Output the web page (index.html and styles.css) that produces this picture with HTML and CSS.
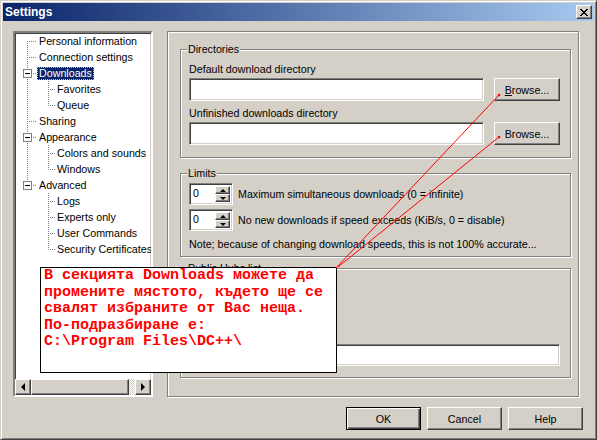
FILE: index.html
```html
<!DOCTYPE html>
<html lang="bg">
<head>
    <meta charset="UTF-8">
    <title>Settings</title>
    <link rel="stylesheet" href="styles.css">
</head>
<body>

<div class="window">
    <div class="titlebar">
        <span class="title">Settings</span>
        <span class="close-btn">
            <svg width="8" height="7" viewBox="0 0 8 7"><path fill="#000" d="M0 0h2v1H0zM6 0h2v1H6zM1 1h2v1H1zM5 1h2v1H5zM2 2h4v1H2zM3 3h2v1H3zM2 4h4v1H2zM1 5h2v1H1zM5 5h2v1H5zM0 6h2v1H0zM6 6h2v1H6z"/></svg>
        </span>
    </div>

    <div class="client">
        <div class="main">
            <!-- page tree -->
            <div class="tree sunken">
                <div class="tree-items">
                    <ul class="nodes">
                        <li><div class="row"><span class="t">Personal information</span></div></li>
                        <li><div class="row"><span class="t">Connection settings</span></div></li>
                        <li class="open"><div class="row"><span class="box"></span><span class="t sel">Downloads</span></div>
                            <ul>
                                <li><div class="row"><span class="t">Favorites</span></div></li>
                                <li><div class="row"><span class="t">Queue</span></div></li>
                            </ul>
                        </li>
                        <li><div class="row"><span class="t">Sharing</span></div></li>
                        <li class="open"><div class="row"><span class="box"></span><span class="t">Appearance</span></div>
                            <ul>
                                <li><div class="row"><span class="t">Colors and sounds</span></div></li>
                                <li><div class="row"><span class="t">Windows</span></div></li>
                            </ul>
                        </li>
                        <li class="open"><div class="row"><span class="box"></span><span class="t">Advanced</span></div>
                            <ul>
                                <li><div class="row"><span class="t">Logs</span></div></li>
                                <li><div class="row"><span class="t">Experts only</span></div></li>
                                <li><div class="row"><span class="t">User Commands</span></div></li>
                                <li><div class="row"><span class="t">Security Certificates</span></div></li>
                            </ul>
                        </li>
                    </ul>
                </div>
                <div class="hscroll">
                    <span class="sbtn raised"><span class="arrow-left"></span></span>
                    <span class="thumb raised"></span>
                    <span class="track"></span>
                    <span class="sbtn raised"><span class="arrow-right"></span></span>
                </div>
            </div>

            <!-- Downloads page -->
            <div class="page">
                <fieldset class="group dirs">
                    <legend>Directories</legend>
                    <div class="lbl">Default download directory</div>
                    <div class="path-row">
                        <span class="field sunken"></span>
                        <span class="btn raised"><u>B</u>rowse...</span>
                    </div>
                    <div class="lbl">Unfinished downloads directory</div>
                    <div class="path-row">
                        <span class="field sunken"></span>
                        <span class="btn raised">Browse...</span>
                    </div>
                </fieldset>

                <fieldset class="group limits">
                    <legend>Limits</legend>
                    <div class="spin-row">
                        <span class="spin sunken">
                            <span class="spin-val">0</span>
                            <span class="spin-btns"><span class="sb raised up"></span><span class="sb raised down"></span></span>
                        </span>
                        <span>Maximum simultaneous downloads (0 = infinite)</span>
                    </div>
                    <div class="spin-row">
                        <span class="spin sunken">
                            <span class="spin-val">0</span>
                            <span class="spin-btns"><span class="sb raised up"></span><span class="sb raised down"></span></span>
                        </span>
                        <span>No new downloads if speed exceeds (KiB/s, 0 = disable)</span>
                    </div>
                    <div class="note-line">Note; because of changing download speeds, this is not 100% accurate...</div>
                </fieldset>

                <fieldset class="group hubs">
                    <legend>Public Hubs list</legend>
                    <span class="btn raised hub-btn">Configure Public Hub Lists</span>
                    <div class="lbl">HTTP Proxy (for hublist only)</div>
                    <span class="field sunken wide"></span>
                </fieldset>
            </div>
        </div>

        <div class="actions">
            <span class="btn raised default">OK</span>
            <span class="btn raised">Cancel</span>
            <span class="btn raised">Help</span>
        </div>
    </div>

    <!-- help callout pointing at the Browse buttons -->
    <div class="callout">В секцията Downloads можете да<br>промените мястото, където ще се<br>свалят избраните от Вас неща.<br>По-подразбиране е:<br>C:\Program Files\DC++\</div>

    <svg class="pointers" width="597" height="440" viewBox="0 0 597 440">
        <g stroke="#ff0000" stroke-width="1" fill="none">
            <line x1="336" y1="268" x2="499" y2="95"/>
            <line x1="338" y1="267" x2="499" y2="137"/>
        </g>
        <g fill="#ff0000">
            <circle cx="499" cy="95" r="1.3"/>
            <circle cx="499" cy="137" r="1.3"/>
        </g>
    </svg>
</div>

</body>
</html>
```

FILE: styles.css
```css
body {
    margin: 0;
    background: #d4d0c8;
    font-family: "Liberation Sans", Arial, sans-serif;
    font-size: 10.7px;
    color: #000;
}

/* classic 3D edges */
.raised {
    box-sizing: border-box;
    background: #d4d0c8;
    border: 1px solid;
    border-color: #fff #404040 #404040 #fff;
    box-shadow: inset -1px -1px 0 #808080;
}

.sunken {
    box-sizing: border-box;
    background: #fff;
    border: 1px solid;
    border-color: #808080 #fff #fff #808080;
    box-shadow: inset 1px 1px 0 #404040, inset -1px -1px 0 #d4d0c8;
}

.window {
    position: relative;
    width: 597px;
    height: 440px;
    box-sizing: border-box;
    padding: 2px;
    background: #d4d0c8;
    border: 1px solid;
    border-color: #d4d0c8 #404040 #404040 #d4d0c8;
    box-shadow: inset 1px 1px 0 #fff, inset -1px -1px 0 #808080;
    display: flex;
    flex-direction: column;
}

.titlebar {
    height: 18px;
    display: flex;
    align-items: center;
    justify-content: space-between;
    padding: 0 2px;
    background: linear-gradient(to right, #0a246a, #a6caf0);
}

.title {
    color: #fff;
    font-weight: bold;
    font-size: 12px;
}

.close-btn {
    width: 16px;
    height: 14px;
    display: flex;
    align-items: center;
    justify-content: center;
    box-sizing: border-box;
    background: #d4d0c8;
    border: 1px solid;
    border-color: #fff #404040 #404040 #fff;
    box-shadow: inset -1px -1px 0 #808080;
}

.client {
    flex: 1;
    display: flex;
    flex-direction: column;
    padding: 10px 11px 0 10px;
}

.main {
    display: flex;
    gap: 14px;
    height: 366px;
}

/* tree */
.tree {
    width: 140px;
    height: 366px;
    display: flex;
    flex-direction: column;
    border-width: 2px;
    border-style: solid;
    border-color: #808080 #fff #fff #808080;
    box-shadow: inset 1px 1px 0 #404040, inset -1px -1px 0 #d4d0c8;
    padding: 0;
}

.tree .tree-items {
    flex: 1;
    overflow: hidden;
}

.nodes, .nodes ul {
    list-style: none;
    margin: 0;
    padding: 0;
}

.nodes li {
    position: relative;
}

.nodes > li {
    padding-left: 24px;
}

.nodes ul > li {
    padding-left: 18px;
}

.row {
    height: 16px;
    display: flex;
    align-items: center;
    white-space: nowrap;
}

/* dotted connectors */
.nodes li::before {
    content: "";
    position: absolute;
    top: 0;
    bottom: 0;
    width: 1px;
    background: repeating-linear-gradient(to bottom, #808080 0 1px, transparent 1px 2px);
}

.nodes > li::before { left: 12px; }
.nodes > li:first-child::before { top: 8px; }
.nodes ul > li::before { left: 9px; }
.nodes li:last-child::before { bottom: auto; height: 9px; }

.row::before {
    content: "";
    position: absolute;
    top: 8px;
    height: 1px;
    background: repeating-linear-gradient(to right, #808080 0 1px, transparent 1px 2px);
}

.nodes > li > .row::before { left: 12px; width: 10px; }
.nodes ul > li > .row::before { left: 9px; width: 7px; }

.box {
    position: absolute;
    left: 8px;
    top: 4px;
    width: 9px;
    height: 9px;
    box-sizing: border-box;
    border: 1px solid #808080;
    background: #fff;
}

.box::after {
    content: "";
    position: absolute;
    left: 1px;
    top: 3px;
    width: 5px;
    height: 1px;
    background: #000;
}

.t {
    padding: 0 2px;
    margin-left: -2px;
    line-height: 13px;
}

.t.sel {
    background: #0a246a;
    color: #fff;
    outline: 1px dotted #c8c480;
    outline-offset: -1px;
}

.hscroll {
    height: 16px;
    display: flex;
}

.sbtn {
    width: 16px;
    height: 16px;
    display: flex;
    align-items: center;
    justify-content: center;
}

.arrow-left {
    border-right: 4px solid #000;
    border-top: 4px solid transparent;
    border-bottom: 4px solid transparent;
}

.arrow-right {
    border-left: 4px solid #000;
    border-top: 4px solid transparent;
    border-bottom: 4px solid transparent;
}

.thumb {
    width: 98px;
    height: 16px;
}

.track {
    flex: 1;
    background: repeating-conic-gradient(#fff 0 25%, #d4d0c8 0 50%) 0 0 / 2px 2px;
}

/* right page */
.page {
    width: 412px;
    height: 366px;
    box-sizing: border-box;
    padding: 11px 7px 0 12px;
    border: 1px solid #808080;
    box-shadow: 1px 1px 0 #fff, inset 1px 1px 0 #fff;
}

.group {
    margin: 0;
    min-width: 0;
    border: 1px solid #808080;
    box-shadow: 1px 1px 0 #fff, inset 1px 1px 0 #fff;
    padding: 7px 10px 12px 8px;
}

.group legend {
    padding: 0 1px;
    margin-left: -2px;
    line-height: 13px;
    background: #d4d0c8;
}

.lbl {
    line-height: 13px;
    margin-bottom: 2px;
}

.path-row {
    display: flex;
    gap: 10px;
    margin-bottom: 6px;
}

.path-row:last-child {
    margin-bottom: 0;
}

.field {
    flex: 1;
    height: 23px;
}

.btn {
    width: 66px;
    height: 23px;
    display: flex;
    align-items: center;
    justify-content: center;
}

.limits {
    margin-top: 9px;
    padding: 3px 10px 5px 8px;
}

.spin-row {
    display: flex;
    align-items: center;
    gap: 5px;
    margin-bottom: 4px;
}

.spin {
    width: 44px;
    height: 22px;
    display: flex;
    padding: 2px;
}

.spin-val {
    flex: 1;
    line-height: 14px;
    padding-left: 1px;
}

.spin-btns {
    width: 15px;
    display: flex;
    flex-direction: column;
}

.sb {
    flex: 1;
    display: flex;
    align-items: center;
    justify-content: center;
}

.sb::after {
    content: "";
    border-left: 3px solid transparent;
    border-right: 3px solid transparent;
}

.sb.up::after { border-bottom: 3px solid #000; }
.sb.down::after { border-top: 3px solid #000; }

.note-line {
    line-height: 13px;
    margin-top: 7px;
}

.hubs {
    margin-top: 5px;
    padding: 8px 10px 11px 8px;
}

.hub-btn {
    width: 140px;
    margin-bottom: 23px;
}

.field.wide {
    display: block;
    height: 22px;
}

.actions {
    display: flex;
    justify-content: flex-end;
    gap: 6px;
    margin-top: 10px;
}

.actions .btn {
    width: 75px;
}

.btn.default {
    border-color: #000;
    box-shadow: inset 1px 1px 0 #fff, inset -1px -1px 0 #404040, inset -2px -2px 0 #808080;
}

/* callout over the dialog */
.callout {
    position: absolute;
    left: 39px;
    top: 266px;
    width: 297px;
    height: 106px;
    box-sizing: border-box;
    padding: 0 3px;
    border: 1px solid #000;
    background: #fff;
    color: #ff0000;
    font-family: "Liberation Mono", "Courier New", monospace;
    font-weight: bold;
    font-size: 15px;
    line-height: 16.6px;
    white-space: nowrap;
}

.pointers {
    position: absolute;
    left: -1px;
    top: -1px;
    pointer-events: none;
}
```
